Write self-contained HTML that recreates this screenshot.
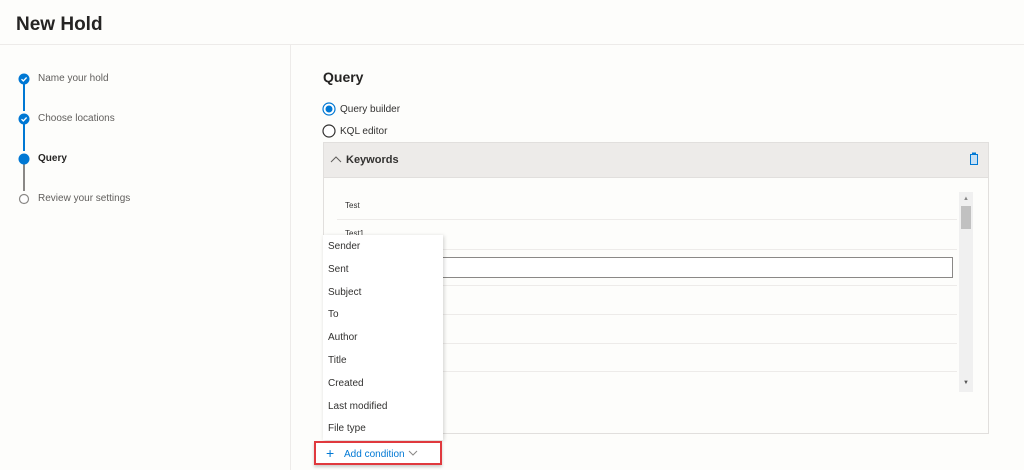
<!DOCTYPE html>
<html><head><style>
body{margin:0;width:1024px;height:470px;background:#fdfdfb;font-family:"Liberation Sans",sans-serif;color:#323130;position:relative;overflow:hidden}
.a{position:absolute}
.t{font-size:10px;color:#605e5c}
</style></head><body>
<div class="a" style="left:16px;top:14px;font-size:19px;font-weight:bold;color:#252423">New Hold</div>
<div class="a" style="left:0;top:44px;width:1024px;height:1px;background:#edebe9"></div>
<div class="a" style="left:290px;top:45px;width:1px;height:425px;background:#edebe9"></div>
<div class="a" style="left:23px;top:83px;width:2px;height:28px;background:#0078d4"></div>
<div class="a" style="left:23px;top:123px;width:2px;height:28px;background:#0078d4"></div>
<div class="a" style="left:23px;top:163px;width:2px;height:28px;background:#8a8886"></div>
<svg class="a" style="left:18px;top:73px" width="12" height="12"><circle cx="6" cy="6" r="5.5" fill="#0078d4"/><path d="M3.5 6.2l1.8 1.7 3.3-3.4" stroke="#fff" stroke-width="1.3" fill="none"/></svg>
<svg class="a" style="left:18px;top:113px" width="12" height="12"><circle cx="6" cy="6" r="5.5" fill="#0078d4"/><path d="M3.5 6.2l1.8 1.7 3.3-3.4" stroke="#fff" stroke-width="1.3" fill="none"/></svg>
<svg class="a" style="left:18px;top:153px" width="12" height="12"><circle cx="6" cy="6" r="5.5" fill="#0078d4"/></svg>
<svg class="a" style="left:18px;top:193px" width="12" height="12"><circle cx="6" cy="6" r="4.5" fill="#fff" stroke="#8a8886" stroke-width="1.2"/></svg>
<div class="a t" style="left:38px;top:73px">Name your hold</div>
<div class="a t" style="left:38px;top:113px">Choose locations</div>
<div class="a" style="left:38px;top:153px;font-size:10px;font-weight:bold;color:#252423">Query</div>
<div class="a t" style="left:38px;top:193px">Review your settings</div>
<div class="a" style="left:323px;top:69px;font-size:14px;font-weight:bold;color:#252423">Query</div>
<svg class="a" style="left:322px;top:102px" width="14" height="14"><circle cx="7" cy="7" r="6" fill="#fff" stroke="#0078d4" stroke-width="1.2"/><circle cx="7" cy="7" r="3.5" fill="#0078d4"/></svg>
<svg class="a" style="left:322px;top:124px" width="14" height="14"><circle cx="7" cy="7" r="6" fill="#fff" stroke="#323130" stroke-width="1.2"/></svg>
<div class="a t" style="left:340px;top:104px;color:#323130">Query builder</div>
<div class="a t" style="left:340px;top:126px;color:#323130">KQL editor</div>
<div class="a" style="left:323px;top:142px;width:664px;height:290px;border:1px solid #e1dfdd;background:#fdfdfb"></div>
<div class="a" style="left:324px;top:143px;width:664px;height:34px;background:#edebe9;border-bottom:1px solid #e1dfdd"></div>
<svg class="a" style="left:330px;top:155px" width="12" height="10"><path d="M1 7l5-5 5 5" stroke="#605e5c" fill="none"/></svg>
<div class="a" style="left:346px;top:154px;font-size:11px;font-weight:bold">Keywords</div>
<svg class="a" style="left:969px;top:152px" width="10" height="13"><rect x="1.5" y="2.5" width="7" height="10" fill="#c7e0f4" stroke="#0078d4"/><rect x="3" y="0.5" width="4" height="2" fill="#0078d4"/></svg>
<div class="a" style="left:345px;top:201px;font-size:8px">Test</div>
<div class="a" style="left:337px;top:219px;width:620px;height:1px;background:#edebe9"></div>
<div class="a" style="left:345px;top:229px;font-size:8px">Test1</div>
<div class="a" style="left:337px;top:249px;width:620px;height:1px;background:#edebe9"></div>
<div class="a" style="left:337px;top:257px;width:614px;height:19px;border:1px solid #8a8886;background:#fff"></div>
<div class="a" style="left:337px;top:285px;width:620px;height:1px;background:#edebe9"></div>
<div class="a" style="left:337px;top:314px;width:620px;height:1px;background:#edebe9"></div>
<div class="a" style="left:337px;top:343px;width:620px;height:1px;background:#edebe9"></div>
<div class="a" style="left:337px;top:371px;width:620px;height:1px;background:#edebe9"></div>
<div class="a" style="left:959px;top:192px;width:14px;height:200px;background:#f0f0f0"></div>
<div class="a" style="left:961px;top:206px;width:10px;height:23px;background:#c1c1c1"></div>
<div class="a" style="left:963px;top:196px;font-size:6px;color:#888">▲</div>
<div class="a" style="left:963px;top:380px;font-size:6px;color:#555">▼</div>
<div class="a" style="left:323px;top:235px;width:120px;height:205px;background:#fff;box-shadow:1px 1px 4px rgba(0,0,0,.18)"></div>
<div class="a t" style="left:328px;top:236px;line-height:22.8px;color:#323130">Sender<br>Sent<br>Subject<br>To<br>Author<br>Title<br>Created<br>Last modified<br>File type</div>
<div class="a" style="left:314px;top:441px;width:124px;height:20px;border:2px solid #e0393e;background:#fff;box-shadow:0 2px 3px rgba(0,0,0,.2)"></div>
<div class="a" style="left:326px;top:446px;font-size:14px;color:#0078d4;line-height:14px">+</div>
<div class="a" style="left:344px;top:449px;font-size:10px;color:#0078d4">Add condition</div>
<svg class="a" style="left:408px;top:450px" width="10" height="7"><path d="M1 1l4 4 4-4" stroke="#8a8886" fill="none"/></svg>
</body></html>
